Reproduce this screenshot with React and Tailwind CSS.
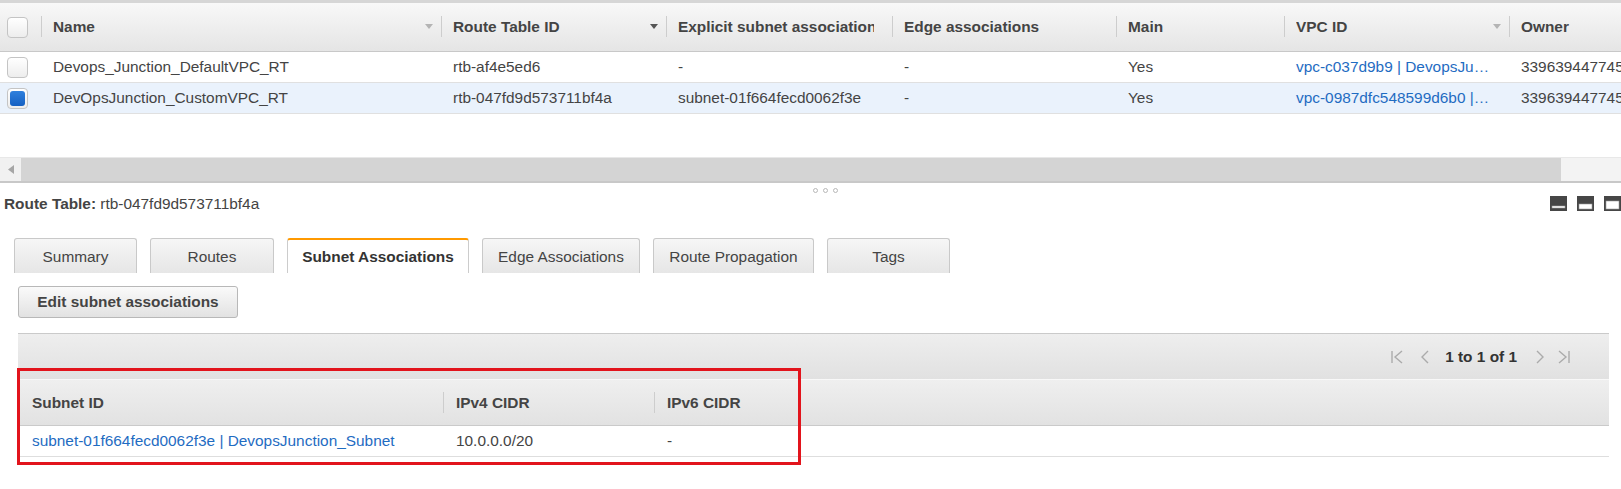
import React from 'react';

const columns = [
  { key: 'name', label: 'Name', width: 'w-[400px]', arrow: '#b4b4b4' },
  { key: 'rtb', label: 'Route Table ID', width: 'w-[225px]', arrow: '#555' },
  { key: 'explicit', label: 'Explicit subnet associations', width: 'w-[226px]', clip: 'max-w-[196px]' },
  { key: 'edge', label: 'Edge associations', width: 'w-[224px]' },
  { key: 'main', label: 'Main', width: 'w-[168px]' },
  { key: 'vpc', label: 'VPC ID', width: 'w-[225px]', arrow: '#b4b4b4' },
  { key: 'owner', label: 'Owner', width: 'w-[200px]' },
];

const rows = [
  {
    id: 1,
    selected: false,
    name: 'Devops_Junction_DefaultVPC_RT',
    rtb: 'rtb-af4e5ed6',
    explicit: '-',
    edge: '-',
    main: 'Yes',
    vpc: 'vpc-c037d9b9 | DevopsJu…',
    owner: '339639447745',
  },
  {
    id: 2,
    selected: true,
    name: 'DevOpsJunction_CustomVPC_RT',
    rtb: 'rtb-047fd9d573711bf4a',
    explicit: 'subnet-01f664fecd0062f3e',
    edge: '-',
    main: 'Yes',
    vpc: 'vpc-0987dfc548599d6b0 |…',
    owner: '339639447745',
  },
];

const tabs = [
  { label: 'Summary', width: 'w-[123px]' },
  { label: 'Routes', width: 'w-[124px]' },
  { label: 'Subnet Associations', width: 'w-[182px]', active: true },
  { label: 'Edge Associations', width: 'w-[158px]' },
  { label: 'Route Propagation', width: 'w-[161px]' },
  { label: 'Tags', width: 'w-[123px]' },
];

const Checkbox = ({ checked }) => (
  <span className="flex h-[21px] w-[21px] items-center justify-center rounded-[4px] border border-[#c4c4c4] bg-linear-to-b from-white to-[#ededed]">
    {checked && (
      <span className="h-[15px] w-[15px] rounded-[3px] bg-linear-to-b from-[#2f80dd] to-[#1560c2]" />
    )}
  </span>
);

const Separator = () => <span className="h-[21px] w-px shrink-0 bg-[#cdcdcd]" />;

const SortArrow = ({ color }) => (
  <svg width="8" height="5" viewBox="0 0 8 5" className="ml-auto shrink-0">
    <path d="M0 0h8L4 5z" fill={color} />
  </svg>
);

const PanelIcon = ({ y, h }) => (
  <svg width="17" height="15" viewBox="0 0 17 15">
    <rect width="17" height="15" fill="#464646" />
    <rect x="2" y={y} width="13" height={h} fill="#fff" stroke="#9a9a9a" strokeWidth="0.6" />
  </svg>
);

const Chevron = ({ d, bar }) => (
  <svg width="12" height="16" viewBox="0 0 12 16" fill="none" stroke="#ababab" strokeWidth="1.4">
    <polyline points={d} />
    {bar !== undefined && <line x1={bar} y1="2" x2={bar} y2="14" />}
  </svg>
);

export default function App() {
  return (
    <div className="h-[489px] w-[1621px] overflow-hidden bg-white font-['Liberation_Sans',Arial,sans-serif] text-[15.4px] text-[#444]">
      <div className="h-[3px] bg-[#d6d6d6]" />

      {/* route tables list */}
      <div className="w-[1720px]">
        <div className="flex h-[49px] items-center border-b border-[#c8c8c8] bg-linear-to-b from-[#f8f8f8] to-[#e5e5e5] font-bold">
          <div className="flex w-[41px] shrink-0 items-center pl-[7px]">
            <Checkbox />
          </div>
          {columns.map((col) => (
            <div key={col.key} className={`${col.width} flex shrink-0 items-center pr-[8px]`}>
              <Separator />
              <span className={`ml-[11px] overflow-hidden whitespace-nowrap pr-[6px] ${col.clip || ''}`}>{col.label}</span>
              {col.arrow && <SortArrow color={col.arrow} />}
            </div>
          ))}
        </div>
        {rows.map((row) => (
          <div
            key={row.id}
            className={`flex h-[31px] items-center border-b border-[#e0e0e0] ${row.selected ? 'bg-[#eaf2fc]' : 'bg-white'}`}
          >
            <div className="flex w-[41px] shrink-0 items-center pl-[7px]">
              <Checkbox checked={row.selected} />
            </div>
            {columns.map((col) => (
              <div
                key={col.key}
                className={`${col.width} shrink-0 whitespace-nowrap pl-[12px] ${col.key === 'vpc' ? 'text-[#1f6cc2]' : ''}`}
              >
                {row[col.key]}
              </div>
            ))}
          </div>
        ))}
      </div>

      {/* horizontal scrollbar */}
      <div className="mt-[43px] flex h-[24px] border-t border-[#e8e8e8]">
        <div className="flex w-[21px] items-center justify-center bg-[#f1f1f1]">
          <svg width="6" height="9" viewBox="0 0 6 9">
            <path d="M6 0v9L0 4.5z" fill="#a6a6a6" />
          </svg>
        </div>
        <div className="w-[1540px] bg-[#d4d4d4]" />
        <div className="flex-1 bg-[#f3f3f3]" />
      </div>
      <div className="h-[2px] bg-[#c8c8c8]" />

      {/* splitter handle */}
      <div className="mt-[5px] flex gap-[5px] pl-[813px]">
        <span className="h-[5px] w-[5px] rounded-full border border-[#b8b8b8]" />
        <span className="h-[5px] w-[5px] rounded-full border border-[#b8b8b8]" />
        <span className="h-[5px] w-[5px] rounded-full border border-[#b8b8b8]" />
      </div>

      {/* details panel */}
      <div className="mt-[3px] flex h-[15px] items-center">
        <div className="pl-[4px] whitespace-nowrap">
          <span className="font-bold">Route Table:</span> rtb-047fd9d573711bf4a
        </div>
        <div className="ml-auto flex gap-[10px]">
          <PanelIcon y={10} h={2} />
          <PanelIcon y={8} h={5} />
          <PanelIcon y={5} h={8} />
        </div>
      </div>

      <div className="mt-[27px] flex items-end gap-[13px] pl-[14px]">
        {tabs.map((tab) =>
          tab.active ? (
            <div
              key={tab.label}
              className={`${tab.width} flex h-[35px] items-center justify-center rounded-t-[3px] border-x border-t-2 border-x-[#cccccc] border-t-[#ff9900] bg-white pt-[1px] font-bold text-[#333]`}
            >
              {tab.label}
            </div>
          ) : (
            <div
              key={tab.label}
              className={`${tab.width} flex h-[35px] items-center justify-center rounded-t-[3px] border-x border-t border-[#c9c9c9] bg-linear-to-b from-[#f6f6f6] to-[#e6e6e6] pt-[2px]`}
            >
              {tab.label}
            </div>
          )
        )}
      </div>

      <button className="ml-[18px] mt-[13px] flex h-[32px] w-[220px] items-center justify-center rounded-[3px] border border-[#b8b8b8] bg-linear-to-b from-[#fafafa] to-[#e2e2e2] font-bold text-[#444]">
        Edit subnet associations
      </button>

      {/* subnet associations table */}
      <div className="relative ml-[18px] mt-[15px] w-[1591px]">
        <div className="flex h-[46px] items-center justify-end border-t border-[#cacaca] bg-linear-to-b from-[#eeeeee] to-[#e1e1e1] pr-[39px]">
          <Chevron d="11,2 4,8 11,14" bar={1} />
          <span className="ml-[17px] flex">
            <Chevron d="8,2 2,8 8,14" />
          </span>
          <span className="ml-[13px] font-bold text-[#333]">1 to 1 of 1</span>
          <span className="ml-[17px] flex">
            <Chevron d="3,2 9,8 3,14" />
          </span>
          <span className="ml-[12px] flex">
            <Chevron d="1,2 8,8 1,14" bar={11} />
          </span>
        </div>
        <div className="flex h-[47px] items-center border-t border-b border-t-[#f8f8f8] border-b-[#cacaca] bg-linear-to-b from-[#efefef] to-[#e2e2e2] font-bold">
          <div className="w-[425px] shrink-0 pl-[14px]">Subnet ID</div>
          <div className="flex w-[211px] shrink-0 items-center">
            <Separator />
            <span className="ml-[12px]">IPv4 CIDR</span>
          </div>
          <div className="flex items-center">
            <Separator />
            <span className="ml-[12px]">IPv6 CIDR</span>
          </div>
        </div>
        <div className="flex h-[31px] items-center border-b border-[#dedede] bg-white">
          <div className="w-[425px] shrink-0 whitespace-nowrap pl-[14px] text-[#1f6cc2]">
            subnet-01f664fecd0062f3e | DevopsJunction_Subnet
          </div>
          <div className="w-[211px] shrink-0 pl-[13px]">10.0.0.0/20</div>
          <div className="pl-[13px]">-</div>
        </div>
        <div className="pointer-events-none absolute left-[-1px] top-[35px] h-[97px] w-[784px] border-[3px] border-[#e2141c]" />
      </div>
    </div>
  );
}
